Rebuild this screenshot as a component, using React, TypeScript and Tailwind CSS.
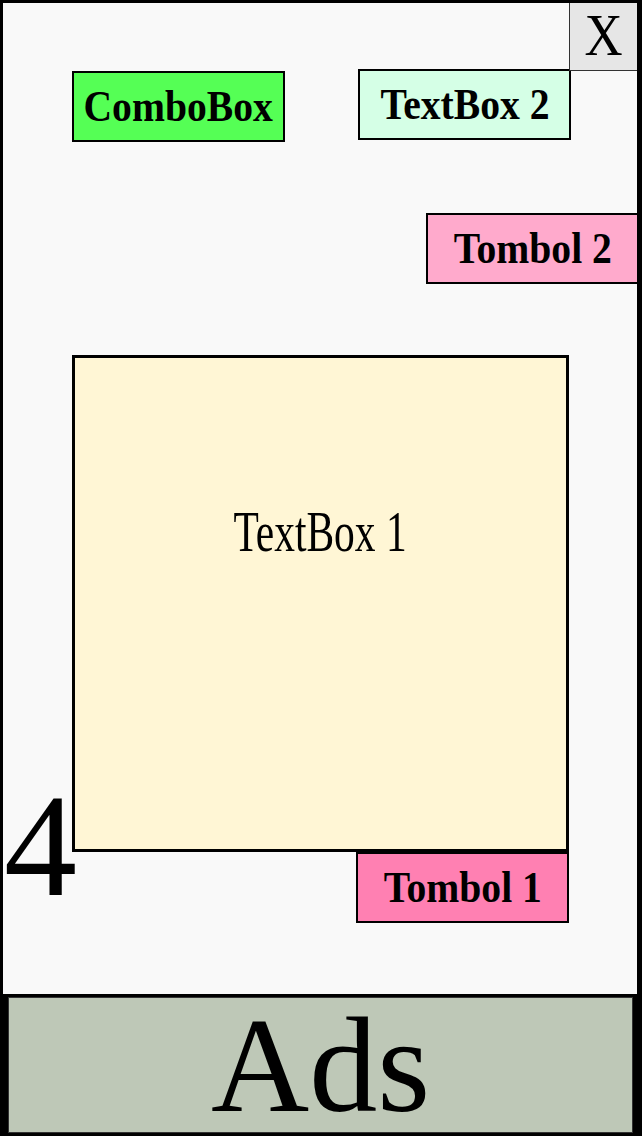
import React from "react";

const serif = { fontFamily: '"Liberation Serif", "Times New Roman", serif' };

function Box({
  className,
  children,
}: {
  className: string;
  children: React.ReactNode;
}) {
  return (
    <div
      className={`flex h-[71px] w-[213px] shrink-0 items-center justify-center border-2 border-black leading-none text-black ${className}`}
    >
      <span className="inline-block scale-x-[0.9] whitespace-nowrap text-[44px] font-bold">{children}</span>
    </div>
  );
}

export default function App() {
  return (
    <div className="flex h-[1136px] w-[642px] flex-col overflow-hidden bg-black" style={serif}>
      <div className="relative flex h-[997px] w-[640px] flex-col border-[3px] border-black bg-[#f9f9f9]">
        <div className="absolute right-0 top-0 flex h-[68px] w-[68px] items-center justify-center border-b border-l border-[#333] bg-[#e6e6e6] pb-[4px] leading-none text-black">
          <span className="inline-block scale-x-[0.88] text-[60px]">X</span>
        </div>
        <div className="flex items-start pt-[66px]">
          <Box className="ml-[69px] mt-[2px] bg-[#55ff55]">ComboBox</Box>
          <Box className="ml-[73px] bg-[#d5ffe6]">TextBox 2</Box>
        </div>
        <Box className="-mr-[2px] mt-[71px] self-end bg-[#ffaacc]">Tombol 2</Box>
        <div className="ml-[69px] mt-[71px] flex h-[497px] w-[497px] flex-col items-center border-[3px] border-black bg-[#fff6d5] pt-[146px]">
          <span className="inline-block scale-x-[0.74] whitespace-nowrap text-[56px] leading-none text-black">
            TextBox 1
          </span>
        </div>
        <Box className="ml-[353px] bg-[#ff80b2]">Tombol 1</Box>
        <div className="absolute left-[1px] top-[770px] text-[146px] leading-none text-black">4</div>
      </div>
      <div className="h-[139px] w-[642px] pb-[3px] pl-[8px] pr-[9px]">
        <div className="flex h-full w-full items-center justify-center border border-[#333] bg-[#bec8b7] text-[136px] leading-[0.9] text-black">
          Ads
        </div>
      </div>
    </div>
  );
}
